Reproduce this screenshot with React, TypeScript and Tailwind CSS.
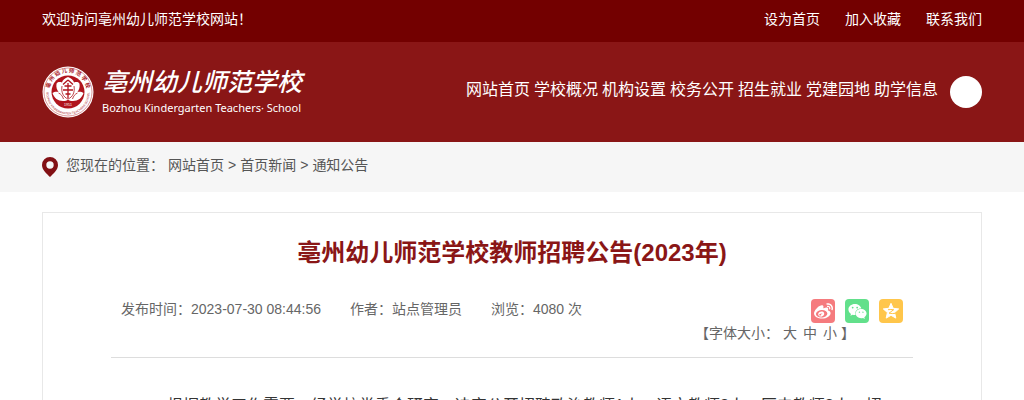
import React from "react";
import { FaWeibo, FaWeixin } from "react-icons/fa";

const TOP_LINKS = ["设为首页", "加入收藏", "联系我们"];

const NAV_ITEMS = ["网站首页", "学校概况", "机构设置", "校务公开", "招生就业", "党建园地", "助学信息"];

const CRUMBS = ["网站首页", "首页新闻", "通知公告"];

const Emblem = () => (
    <svg viewBox="0 0 52 52" className="h-13 w-13 shrink-0" aria-hidden="true">
        <defs>
            <path id="ring-top" d="M8.5 31 A18.5 18.5 0 1 1 43.5 31" />
            <path id="ring-bottom" d="M4.5 27 A21.5 21.5 0 0 0 47.5 27" />
        </defs>
        <circle cx="26" cy="26" r="25.5" fill="#fff" />
        <circle cx="26" cy="26" r="24" fill="none" stroke="#c4555b" strokeWidth="0.6" />
        <circle cx="26" cy="26" r="16.500" fill="#b0141d" />
        <text fontSize="5.500" fontWeight="700" fill="#a8141c" fontFamily="'Noto Sans CJK SC', sans-serif">
            <textPath href="#ring-top" startOffset="50%" textAnchor="middle">亳 州 幼 儿 师 范 学 校</textPath>
        </text>
        <text fontSize="3" fill="#a8141c" fontFamily="'Liberation Sans', sans-serif">
            <textPath href="#ring-bottom" startOffset="50%" textAnchor="middle">BOZHOU KINDERGARTEN TEACHERS SCHOOL</textPath>
        </text>
        {/* lotus petals */}
        <g fill="#fff">
            <path d="M26 11c3 1 5.500 3 6 5.500 2.500-1 5-.5 5.500 1.500.6 3-.5 6-2 8 2.500-.5 4.500 0 6 1-1.500 5-5.500 8-10.500 8-2 0-4-.5-5-1.500-1 1-3 1.500-5 1.500-5 0-9-3-10.500-8 1.500-1 3.500-1.500 6-1-1.500-2-2.600-5-2-8 .5-2 3-2.500 5.500-1.500.5-2.500 3-4.500 6-5.500z" />
        </g>
        <g stroke="#b0141d" strokeWidth="1.300" fill="none">
            <path d="M26 14l-5 4.500M26 14l5 4.500M22.500 20h7M21 24h10M26 17v15M23.500 28h5" />
            <path d="M20 20c-1 6 1 11 6 13 5-2 7-7 6-13M16.500 27c2.500 1 4 3 5 6M35.500 27c-2.500 1-4 3-5 6" strokeWidth="0.800" />
        </g>
        <text x="26" y="40" fontSize="3.500" textAnchor="middle" fill="#fff" fontFamily="'Liberation Sans', sans-serif">1951</text>
    </svg>
);

const PinIcon = () => (
    <svg viewBox="0 0 16 20" className="h-5 w-4 shrink-0" aria-hidden="true">
        <path fillRule="evenodd" fill="#821014" d="M8 0a8 8 0 0 1 8 8c0 4.800-4.500 8.500-8 12C4.500 16.500 0 12.800 0 8a8 8 0 0 1 8-8zm0 4.300a3.700 3.700 0 1 0 0 7.400 3.700 3.700 0 0 0 0-7.400z" />
    </svg>
);

const QzoneIcon = () => (
    <svg viewBox="0 0 18 18" className="h-[18px] w-[18px]" aria-hidden="true">
        <path fill="#fff" stroke="#fff" strokeLinejoin="round" d="M9 1.300l2.200 5 5.500.6-4.100 3.700 1.200 5.500L9 13.300 4.200 16.100l1.200-5.500-4.100-3.700 5.500-.6z" />
        <path fill="none" stroke="#ffc64b" d="M6 7.700c1.800-.3 3.800-.3 5.700 0L7 11.200c2 .4 4.500.5 6.800.1" />
    </svg>
);

export default function App() {
    return (
        <div className="flex h-screen flex-col overflow-hidden bg-white font-['Liberation_Sans','Noto_Sans_CJK_SC',sans-serif] text-sm text-[#555]">
            {/* Top bar */}
            <div className="shrink-0 bg-[#730000] text-white">
                <Container className="flex h-[42px] items-center justify-between pb-1">
                    <p>欢迎访问亳州幼儿师范学校网站！</p>
                    <div className="flex gap-[25px]">
                        {TOP_LINKS.map((item) => (
                            <a key={item} href="#">{item}</a>
                        ))}
                    </div>
                </Container>
            </div>

            {/* Header */}
            <header className="shrink-0 bg-[#8a1616] text-white">
                <Container className="flex h-[100px] items-center justify-between">
                    <a href="#" className="flex items-center gap-2">
                        <Emblem />
                        <span className="flex flex-col">
                            <span className="text-[25px] leading-8 font-medium italic">亳州幼儿师范学校</span>
                            <span className="font-['Noto_Sans',sans-serif] text-[11px] leading-5">Bozhou Kindergarten Teachers· School</span>
                        </span>
                    </a>
                    <div className="flex items-center gap-3">
                        <nav className="flex gap-1 pb-1 text-base">
                            {NAV_ITEMS.map((item) => (
                                <a key={item} href="#">{item}</a>
                            ))}
                        </nav>
                        <button type="button" aria-label="搜索" className="h-8 w-8 rounded-full bg-white" />
                    </div>
                </Container>
            </header>

            {/* Breadcrumb */}
            <div className="shrink-0 bg-[#f6f6f6]">
                <Container className="flex h-[50px] items-center gap-2">
                    <PinIcon />
                    <div className="flex gap-1 pb-1">
                        <span>您现在的位置：</span>
                        {CRUMBS.map((item, i) => (
                            <React.Fragment key={item}>
                                {i > 0 && <span>&gt;</span>}
                                <a href="#">{item}</a>
                            </React.Fragment>
                        ))}
                    </div>
                </Container>
            </div>

            <Container className="pt-5">
                <article className="border border-[#e8e8e8] px-17 pt-5 pb-10">
                    <h1 className="text-center text-2xl leading-10 font-bold text-[#8a1616]">亳州幼儿师范学校教师招聘公告(2023年)</h1>

                    <div className="mt-6 flex justify-between border-b border-[#ddd] px-[10px] pb-[14px] text-[#666]">
                        <div className="flex gap-[29px] pt-[2px]">
                            <span>发布时间：2023-07-30 08:44:56</span>
                            <span>作者：站点管理员</span>
                            <span>浏览：4080 次</span>
                        </div>
                        <div className="flex flex-col items-end">
                            <div className="flex gap-[10px] pt-[2px]">
                                <a href="#" aria-label="微博" className="flex h-6 w-6 items-center justify-center rounded bg-[#f57b7e] text-white">
                                    <FaWeibo size={19} />
                                </a>
                                <a href="#" aria-label="微信" className="flex h-6 w-6 items-center justify-center rounded bg-[#62e08b] text-white">
                                    <FaWeixin size={19} />
                                </a>
                                <a href="#" aria-label="QQ空间" className="flex h-6 w-6 items-center justify-center rounded bg-[#ffc64b]">
                                    <QzoneIcon />
                                </a>
                            </div>
                            <div className="flex gap-1 pr-12">
                                <span>【字体大小：</span>
                                <span className="flex gap-[6px]">
                                    <a href="#">大</a>
                                    <a href="#">中</a>
                                    <a href="#">小</a>
                                </span>
                                <span>】</span>
                            </div>
                        </div>
                    </div>

                    <p className="mt-8 px-6 indent-8 text-base leading-8 text-[#333]">
                        根据教学工作需要，经学校党委会研究，决定公开招聘政治教师1人、语文教师2人、历史教师2人，招聘公告如下。
                    </p>
                </article>
            </Container>
        </div>
    );
}

const Container = ({ className, children }: { className: string; children: React.ReactNode }) => (
    <div className={`mx-auto w-full max-w-[1284px] px-[42px] ${className}`}>{children}</div>
);
